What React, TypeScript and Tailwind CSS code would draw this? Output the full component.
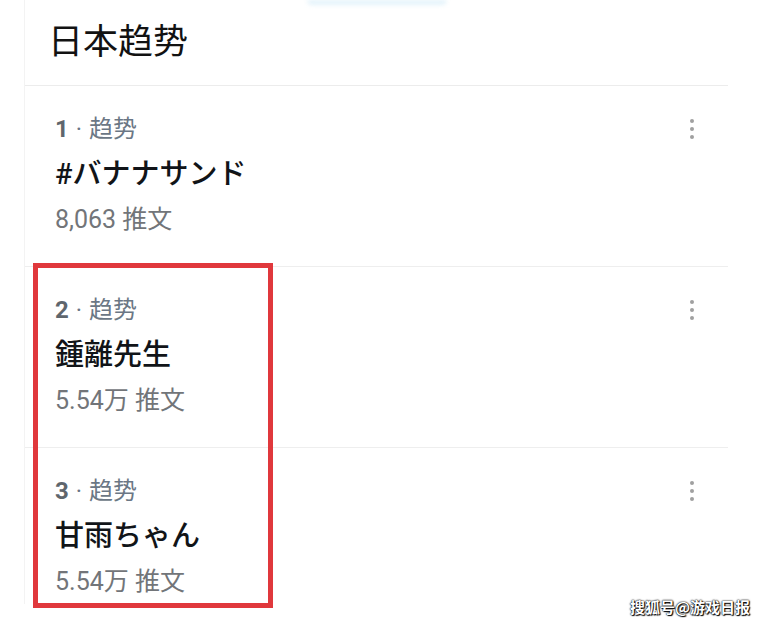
const font_stack = 'font-[Roboto,"Noto_Sans_CJK_JP",sans-serif]'

type Trend = {
  rank: number
  title: string
  count: string
}

const trends: Trend[] = [
  { rank: 1, title: '#バナナサンド', count: '8,063 推文' },
  { rank: 2, title: '鍾離先生', count: '5.54万 推文' },
  { rank: 3, title: '甘雨ちゃん', count: '5.54万 推文' },
]

function KebabIcon(): React.ReactElement {
  return (
    <div className="mt-[12px] flex flex-col items-center gap-[4px]" aria-hidden="true">
      <span className="h-[4px] w-[4px] rounded-full bg-[#a0a0a0]" />
      <span className="h-[4px] w-[4px] rounded-full bg-[#a0a0a0]" />
      <span className="h-[4px] w-[4px] rounded-full bg-[#a0a0a0]" />
    </div>
  )
}

function TrendRow({ trend, last }: { trend: Trend; last: boolean }): React.ReactElement {
  return (
    <div
      className={`flex items-start justify-between pl-[30px] pr-[34px] pt-[21px] ${
        last ? '' : 'border-b border-[#eeeeee] pb-[24px]'
      }`}
    >
      <div className="flex flex-col">
        <p className="m-0 flex h-[45px] items-center text-[24px] leading-[45px] text-[#6b7785]">
          <span className="font-bold text-[#5f666d]">{trend.rank}</span>
          <span className="px-[7px]">·</span>
          <span>趋势</span>
        </p>
        <p className="m-0 h-[45px] text-[29px] font-medium leading-[45px] text-[#111418]">
          {trend.title}
        </p>
        <p className="m-0 h-[45px] text-[25px] leading-[45px] text-[#727579]">
          {trend.count}
        </p>
      </div>
      <KebabIcon />
    </div>
  )
}

export default function App(): React.ReactElement {
  return (
    <div className={`relative h-[626px] w-[769px] overflow-hidden bg-white ${font_stack}`}>
      <div className="ml-[24px] w-[704px] border-l border-[#f3f3f3]">
        <div className="relative h-[86px] border-b border-[#ececec]">
          <div className="absolute left-[282px] top-0 h-[5px] w-[140px] rounded-b-full bg-[#e3f3fb] blur-[2px]" />
          <div className="flex h-full items-center pl-[23px]">
            <h1 className="m-0 text-[35px] font-normal leading-none text-[#121212]">日本趋势</h1>
          </div>
        </div>
        {trends.map((trend, index) => (
          <TrendRow key={trend.rank} trend={trend} last={index === trends.length - 1} />
        ))}
      </div>

      {/* annotation box drawn over rows 2 and 3 */}
      <div className="pointer-events-none absolute left-[33px] top-[263px] h-[345px] w-[240px] border-[5px] border-[#e0383c]" />

      <p className='absolute left-[630px] top-[599px] m-0 text-[15px] font-bold leading-none text-white [font-family:"Noto_Sans_CJK_SC",sans-serif] [text-shadow:0_0_1px_#000,0_0_2px_#000,1px_1px_1px_#000]'>
        搜狐号@游戏日报
      </p>
    </div>
  )
}
